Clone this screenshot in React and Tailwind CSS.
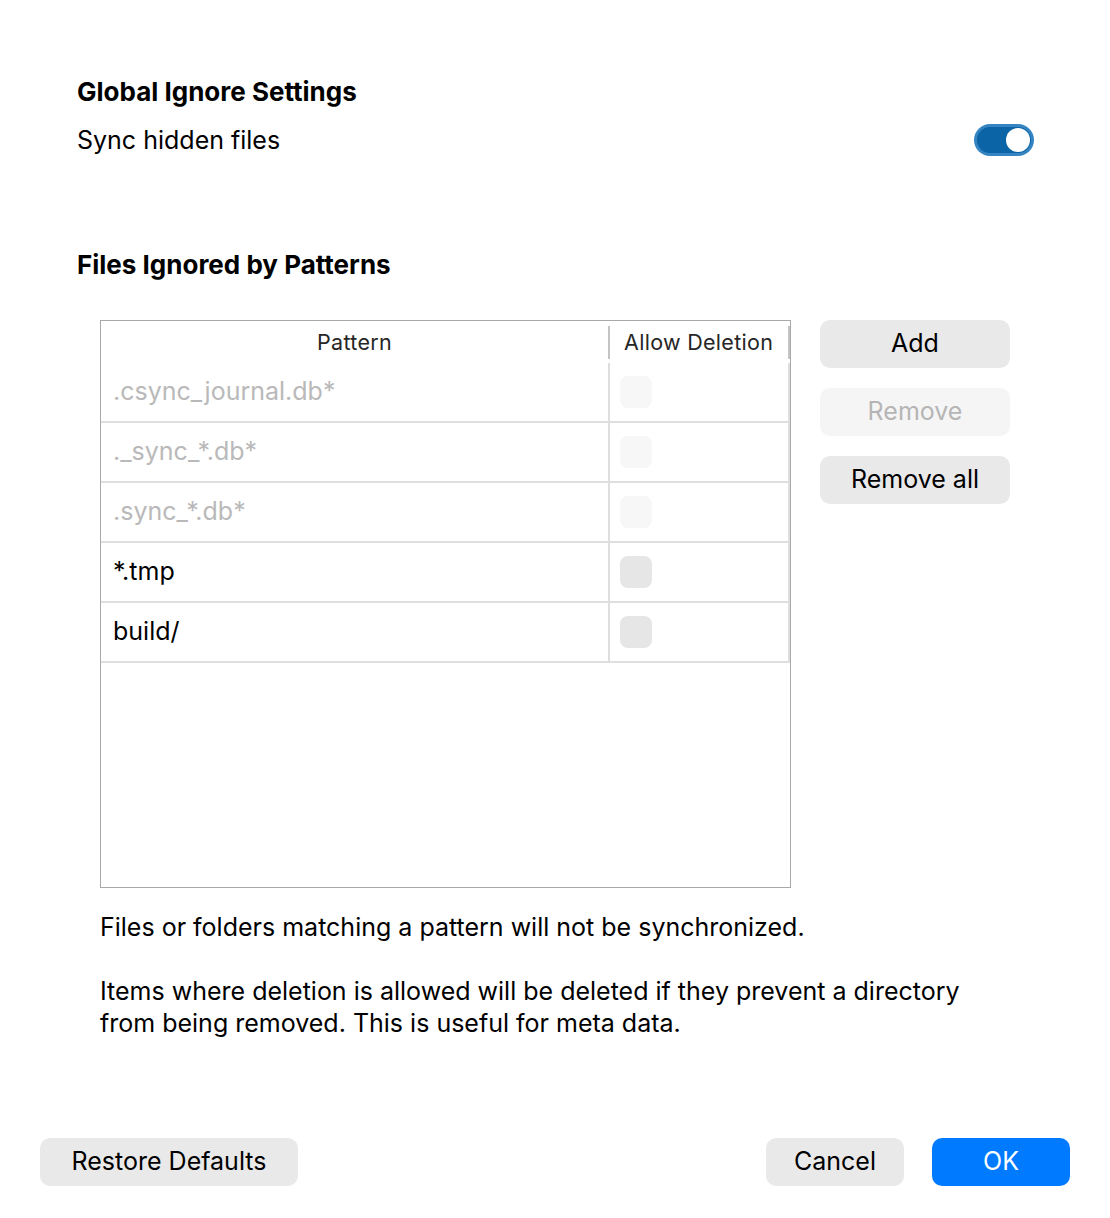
import { useState } from 'react';

const patterns = [
    { text: '.csync_journal.db*', builtin: true },
    { text: '._sync_*.db*', builtin: true },
    { text: '.sync_*.db*', builtin: true },
    { text: '*.tmp', builtin: false },
    { text: 'build/', builtin: false },
];

function Toggle({ on, onChange }) {
    return (
        <button
            onClick={() => onChange(!on)}
            className={`w-[60px] h-[32px] rounded-full p-[3px] flex items-center ${on ? 'bg-[#3585c3] justify-end' : 'bg-[#d9d9d9] justify-start'}`}
        >
            <span className={`w-full h-full rounded-full flex items-center px-[1px] ${on ? 'bg-[#0b64a6] justify-end' : 'bg-[#e9e9e9] justify-start'}`}>
                <span className="w-[24px] h-[24px] rounded-full bg-white"></span>
            </span>
        </button>
    );
}

function SideButton({ label, disabled }) {
    return (
        <button
            disabled={disabled}
            className={`w-[190px] h-[48px] rounded-[10px] text-[25px] ${disabled ? 'bg-[#f5f5f5] text-[#b5b5b5]' : 'bg-[#e9e9e9] text-black'}`}
        >
            {label}
        </button>
    );
}

export default function App() {
    const [syncHidden, setSyncHidden] = useState(true);
    const [allowed, setAllowed] = useState({});

    return (
        <div className="w-[1110px] h-[1218px] bg-white flex flex-col text-black" style={{ fontFamily: 'Inter, "Noto Sans", sans-serif' }}>
            <div className="pt-[76px] pl-[77px] pr-[76px]">
                <h2 className="text-[26px] leading-[32px] font-bold">Global Ignore Settings</h2>
                <div className="mt-[16px] flex items-center justify-between">
                    <span className="text-[25px] leading-[32px]">Sync hidden files</span>
                    <Toggle on={syncHidden} onChange={setSyncHidden} />
                </div>
                <h2 className="mt-[93px] text-[26px] leading-[32px] font-bold">Files Ignored by Patterns</h2>
            </div>

            <div className="mt-[39px] pl-[100px] flex gap-[29px] items-start">
                {/* Pattern table */}
                <div className="w-[691px] h-[568px] border border-[#a9a9a9] flex flex-col">
                    <div className="h-[42px] flex items-center text-[21.5px] tracking-[0.3px] text-[#262626]">
                        <div className="w-[507px] text-center">Pattern</div>
                        <div className="w-[2px] h-[33px] bg-[#c4c4c4]"></div>
                        <div className="flex-1 pl-[14px]">Allow Deletion</div>
                        <div className="w-[2px] h-[33px] bg-[#c4c4c4]"></div>
                    </div>
                    {patterns.map((p, i) => (
                        <div key={i} className="h-[60px] flex border-b-2 border-[#dedede]">
                            <div className={`w-[507px] pl-[12px] flex items-center text-[25px] ${p.builtin ? 'text-[#b9b9b9]' : 'text-black'}`}>
                                {p.text}
                            </div>
                            <div className="w-[2px] bg-[#dedede]"></div>
                            <div className="flex-1 pl-[10px] flex items-center">
                                <button
                                    disabled={p.builtin}
                                    onClick={() => setAllowed({ ...allowed, [i]: !allowed[i] })}
                                    className={`w-[32px] h-[32px] rounded-[8px] ${p.builtin ? 'bg-[#f7f7f7]' : 'bg-[#e6e6e6]'}`}
                                ></button>
                            </div>
                            <div className="w-[2px] bg-[#dedede]"></div>
                        </div>
                    ))}
                </div>

                <div className="flex flex-col gap-[20px]">
                    <SideButton label="Add" />
                    <SideButton label="Remove" disabled />
                    <SideButton label="Remove all" />
                </div>
            </div>

            <div className="mt-[23px] pl-[100px] pr-[100px] text-[25px] leading-[32px]">
                <p>Files or folders matching a pattern will not be synchronized.</p>
                <p className="mt-[32px]">Items where deletion is allowed will be deleted if they prevent a directory from being removed. This is useful for meta data.</p>
            </div>

            <div className="mt-auto pb-[32px] px-[40px] flex items-center">
                <button className="w-[258px] h-[48px] rounded-[10px] bg-[#e9e9e9] text-[25px]">Restore Defaults</button>
                <div className="flex-1"></div>
                <button className="w-[138px] h-[48px] rounded-[10px] bg-[#e9e9e9] text-[25px]">Cancel</button>
                <button className="ml-[28px] w-[138px] h-[48px] rounded-[10px] bg-[#007aff] text-white text-[25px]">OK</button>
            </div>
        </div>
    );
}
